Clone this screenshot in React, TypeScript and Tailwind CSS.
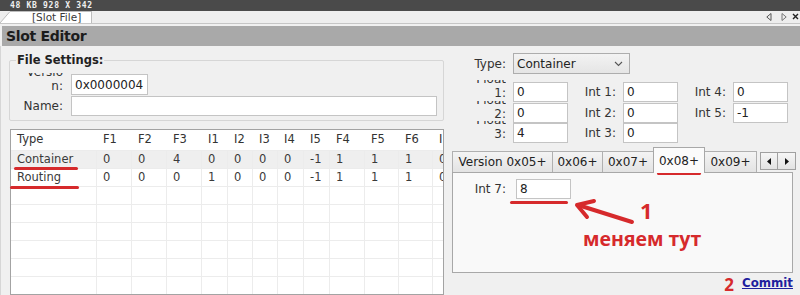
import React from "react";

const UI = { fontFamily: '"DejaVu Sans", Verdana, sans-serif' };

const colW = [
  "w-[86px]",
  "w-[35px]",
  "w-[35px]",
  "w-[35px]",
  "w-[26px]",
  "w-[25px]",
  "w-[25px]",
  "w-[26px]",
  "w-[26px]",
  "w-[35px]",
  "w-[34px]",
  "w-[34px]",
  "w-[40px]",
];
const headers = ["Type", "F1", "F2", "F3", "I1", "I2", "I3", "I4", "I5", "F4", "F5", "F6", "I6"];
const rows: string[][] = [
  ["Container", "0", "0", "4", "0", "0", "0", "0", "-1", "1", "1", "1", "0"],
  ["Routing", "0", "0", "0", "1", "0", "0", "0", "-1", "1", "1", "1", "0"],
  ["", "", "", "", "", "", "", "", "", "", "", "", ""],
  ["", "", "", "", "", "", "", "", "", "", "", "", ""],
  ["", "", "", "", "", "", "", "", "", "", "", "", ""],
  ["", "", "", "", "", "", "", "", "", "", "", "", ""],
  ["", "", "", "", "", "", "", "", "", "", "", "", ""],
  ["", "", "", "", "", "", "", "", "", "", "", "", ""],
];

function Input({ value, className }: { value: string; className: string }) {
  return (
    <div
      className={
        "bg-white border border-[#c4c4c4] text-[12px] text-[#222] pl-[3px] flex items-center leading-none " +
        className
      }
    >
      {value}
    </div>
  );
}

function WrapLabel({ top, bottom, className }: { top: string; bottom: string; className: string }) {
  return (
    <div
      className={
        "h-[22px] -mt-[2px] overflow-hidden flex flex-col justify-end items-end text-[12px] leading-[14px] text-[#333] shrink-0 " +
        className
      }
    >
      <span>{top}</span>
      <span className="pb-[2px]">{bottom}</span>
    </div>
  );
}

function Tab({ label, w, selected }: { label: string; w: string; selected?: boolean }) {
  if (selected) {
    return (
      <div
        className={
          "relative z-10 h-[26px] -mb-px border-t border-l border-r border-[#a8a8a8] bg-[#fbfbfb] text-[12px] text-[#222] flex items-start justify-center pt-[4px] " +
          w
        }
      >
        {label}
      </div>
    );
  }
  return (
    <div
      className={
        "h-[21px] border-t border-l border-[#b0b0b0] bg-gradient-to-b from-[#f4f4f4] to-[#e3e3e3] text-[12px] text-[#222] flex items-center justify-center " +
        w
      }
    >
      {label}
    </div>
  );
}

export default function App() {
  return (
    <div className="relative w-[800px] h-[295px] overflow-hidden bg-[#f0f0f0] flex flex-col" style={UI}>
      {/* top dark bar */}
      <div className="h-[11px] bg-[#4a4a4a] flex items-center pl-[10px] shrink-0">
        <span
          className="text-[8px] leading-none tracking-[0.7px] font-bold text-[#f0f0f0]"
          style={{ fontFamily: '"DejaVu Sans Mono", monospace' }}
        >
          48 KB 928 X 342
        </span>
      </div>
      {/* tab strip */}
      <div className="h-[13px] bg-[#eeeeee] border-b border-[#c6c6c6] flex items-end justify-between shrink-0">
        <div className="flex items-end h-full">
          <svg width="10" height="12" viewBox="0 0 10 12" className="block">
            <polygon points="0,12 10,0 10,12" fill="#ffffff" />
            <line x1="0" y1="12" x2="10" y2="0.5" stroke="#bdbdbd" strokeWidth="1" />
          </svg>
          <div className="h-[12px] w-[82px] bg-white border-t border-r border-[#bdbdbd] text-[10.5px] leading-none text-[#3a3a3a] flex items-center pl-[22px]">
            [Slot File]
          </div>
        </div>
        <div className="flex items-center h-full gap-[5px] pr-[1px] pb-[1px]">
          <svg width="6" height="8" viewBox="0 0 6 8">
            <polygon points="5,0.5 5,7.5 0.8,4" fill="none" stroke="#555" strokeWidth="1" />
          </svg>
          <svg width="6" height="8" viewBox="0 0 6 8" className="ml-[4px]">
            <polygon points="1,0.5 1,7.5 5.2,4" fill="none" stroke="#777" strokeWidth="1" />
          </svg>
          <svg width="7" height="7" viewBox="0 0 7 7">
            <path d="M1 1 L6 6 M6 1 L1 6" stroke="#222" strokeWidth="1.4" />
          </svg>
        </div>
      </div>
      <div className="h-[2px] shrink-0" />
      {/* Slot Editor bar */}
      <div className="h-[20px] ml-[2px] bg-[#a9a9a9] flex items-center pl-[4px] shrink-0">
        <span className="text-[14px] font-bold text-[#1c1c1c] leading-none tracking-[-0.3px]">Slot Editor</span>
      </div>

      {/* main */}
      <div className="flex flex-1 min-h-0 border-l border-[#d6d6d6]">
        {/* left column */}
        <div className="w-[443px] pl-[8px] pt-[7px] flex flex-col shrink-0 min-h-0">
          <fieldset className="border border-[#d6d6d6] rounded-[2px] pb-[4px] w-[435px]">
            <legend className="ml-[6px] px-[1px] text-[11.5px] font-bold leading-[14px] text-[#222]">
              File Settings:
            </legend>
            <div className="flex flex-col gap-[1px] mt-[7px]">
              <div className="flex h-[21px] items-center">
                <WrapLabel top="Versio" bottom="n:" className="w-[53px]" />
                <Input value="0x0000004" className="ml-[8px] w-[77px] h-[21px]" />
              </div>
              <div className="flex h-[20px] items-center">
                <div className="w-[53px] text-right text-[12px] text-[#333]">Name:</div>
                <Input value="" className="ml-[8px] w-[366px] h-[20px]" />
              </div>
            </div>
          </fieldset>

          {/* table */}
          <div className="mt-[8px] ml-[1px] w-[434px] flex-1 border border-[#a3a3a3] bg-white overflow-hidden">
            <div className="flex h-[21px] border-b border-[#ececec] w-max">
              {headers.map((h, i) => (
                <div
                  key={i}
                  className={"shrink-0 pl-[6px] text-[11.5px] text-[#333] flex items-center whitespace-nowrap " + colW[i]}
                >
                  {h === "I6" ? "I" : h}
                </div>
              ))}
            </div>
            {rows.map((r, ri) => (
              <div
                key={ri}
                className={
                  "flex h-[18px] border-b border-[#ececec] w-max " + (ri === 0 ? "bg-[#efefef]" : "bg-white")
                }
              >
                {r.map((c, ci) => (
                  <div
                    key={ci}
                    className={
                      "shrink-0 pl-[6px] text-[11.5px] text-[#3a3a3a] flex items-center whitespace-nowrap overflow-hidden border-r border-[#ececec] " +
                      colW[ci]
                    }
                  >
                    {c}
                  </div>
                ))}
              </div>
            ))}
          </div>
        </div>

        {/* right column */}
        <div className="flex-1 pl-[8px] pt-[7px] pr-[6px] flex flex-col">
          <div className="flex items-center h-[21px]">
            <div className="w-[54px] text-right text-[12px] text-[#333]">Type:</div>
            <div className="ml-[7px] w-[117px] h-[21px] border border-[#adadad] bg-gradient-to-b from-[#f3f3f3] to-[#e5e5e5] flex items-center justify-between pl-[3px] pr-[6px] text-[12px] text-[#222]">
              <span>Container</span>
              <svg width="9" height="6" viewBox="0 0 9 6">
                <path d="M1 1 L4.5 4.5 L8 1" fill="none" stroke="#555" strokeWidth="1.1" />
              </svg>
            </div>
          </div>

          <div className="mt-[8px] flex flex-col gap-[0.5px]">
            <div className="flex h-[20px] items-center">
              <WrapLabel top="Float" bottom="1:" className="w-[54px]" />
              <Input value="0" className="ml-[7px] w-[55px] h-[20px]" />
              <div className="ml-[12px] w-[36px] text-right text-[12px] text-[#333]">Int 1:</div>
              <Input value="0" className="ml-[7px] w-[55px] h-[20px]" />
              <div className="ml-[12px] w-[36px] text-right text-[12px] text-[#333]">Int 4:</div>
              <Input value="0" className="ml-[7px] w-[55px] h-[20px]" />
            </div>
            <div className="flex h-[20px] items-center">
              <WrapLabel top="Float" bottom="2:" className="w-[54px]" />
              <Input value="0" className="ml-[7px] w-[55px] h-[20px]" />
              <div className="ml-[12px] w-[36px] text-right text-[12px] text-[#333]">Int 2:</div>
              <Input value="0" className="ml-[7px] w-[55px] h-[20px]" />
              <div className="ml-[12px] w-[36px] text-right text-[12px] text-[#333]">Int 5:</div>
              <Input value="-1" className="ml-[7px] w-[55px] h-[20px]" />
            </div>
            <div className="flex h-[20px] items-center">
              <WrapLabel top="Float" bottom="3:" className="w-[54px]" />
              <Input value="4" className="ml-[7px] w-[55px] h-[20px]" />
              <div className="ml-[12px] w-[36px] text-right text-[12px] text-[#333]">Int 3:</div>
              <Input value="0" className="ml-[7px] w-[55px] h-[20px]" />
            </div>
          </div>

          {/* tabs */}
          <div className="mt-[4px] flex items-end h-[25px]">
            <Tab label="Version 0x05+" w="w-[100px]" />
            <Tab label="0x06+" w="w-[50px]" />
            <Tab label="0x07+" w="w-[51px]" />
            <Tab label="0x08+" w="w-[52px]" selected />
            <div className="h-[21px] w-[52px] border-t border-r border-[#b0b0b0] bg-gradient-to-b from-[#f4f4f4] to-[#e3e3e3] text-[12px] text-[#222] flex items-center justify-center">
              0x09+
            </div>
            <div className="ml-[3px] mb-[2px] flex">
              <div className="w-[18px] h-[18px] border border-[#a0a0a0] bg-gradient-to-b from-[#f6f6f6] to-[#e2e2e2] flex items-center justify-center">
                <svg width="4" height="7" viewBox="0 0 4 7">
                  <polygon points="4,0 4,7 0,3.5" fill="#111" />
                </svg>
              </div>
              <div className="w-[18px] h-[18px] border border-l-0 border-[#a0a0a0] bg-gradient-to-b from-[#f6f6f6] to-[#e2e2e2] flex items-center justify-center">
                <svg width="4" height="7" viewBox="0 0 4 7">
                  <polygon points="0,0 0,7 4,3.5" fill="#111" />
                </svg>
              </div>
            </div>
          </div>
          <div className="w-[341px] h-[101px] border border-[#a8a8a8] bg-[#f9f9f9] pt-[6px] pl-[20px]">
            <div className="flex items-center h-[20px]">
              <div className="w-[33px] text-right text-[12px] text-[#333]">Int 7:</div>
              <Input value="8" className="ml-[10px] w-[55px] h-[20px]" />
            </div>
          </div>
          <div className="mt-[2px] flex items-center justify-end h-[18px] w-[341px]">
            <span className="text-[17px] font-bold leading-none text-[#d62a2c] mr-[8px]" style={{ fontFamily: '"Open Sans", sans-serif' }}>
              2
            </span>
            <span className="text-[11.8px] font-bold text-[#1f1f9e] underline leading-none">Commit</span>
          </div>
        </div>
      </div>

      {/* annotations */}
      <div className="absolute left-[14px] top-[167px] w-[64px] h-[3px] rounded-full bg-[#d62a2c]" />
      <div className="absolute left-[10px] top-[186px] w-[69px] h-[3px] rounded-full bg-[#d62a2c]" />
      <div className="absolute left-[657px] top-[172px] w-[44px] h-[3px] rounded-full bg-[#d62a2c]" />
      <div className="absolute left-[510px] top-[201px] w-[58px] h-[3px] rounded-full bg-[#d62a2c]" />
      <svg className="absolute left-[570px] top-[195px]" width="70" height="34" viewBox="0 0 70 34">
        <path d="M62 27 L8 10" stroke="#d62a2c" strokeWidth="4" strokeLinecap="round" />
        <path d="M24 6 L7 10 L17 22" fill="none" stroke="#d62a2c" strokeWidth="4" strokeLinecap="round" strokeLinejoin="round" />
      </svg>
      <div
        className="absolute left-[640px] top-[199px] text-[22px] font-bold leading-none text-[#d62a2c]"
        style={{ fontFamily: '"Open Sans", sans-serif' }}
      >
        1
      </div>
      <div
        className="absolute left-[583px] top-[229px] text-[19.5px] font-bold leading-none text-[#d62a2c] whitespace-nowrap"
        style={{ fontFamily: '"Open Sans", sans-serif' }}
      >
        меняем тут
      </div>
    </div>
  );
}
